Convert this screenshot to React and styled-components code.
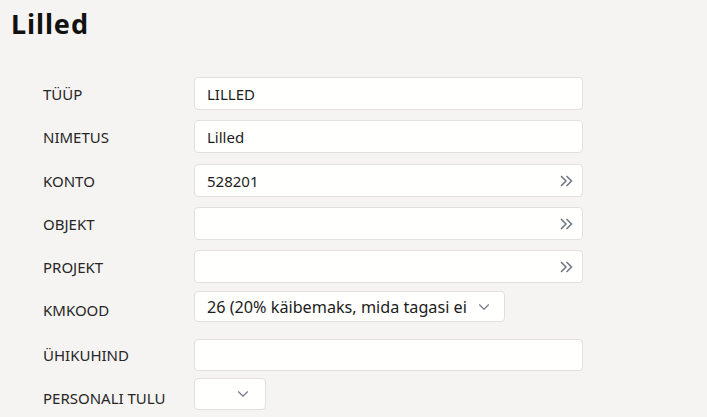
import React from "react";
import styled, { createGlobalStyle } from "styled-components";
import { ChevronDown } from "lucide-react";

const GlobalStyle = createGlobalStyle`
	html, body {
		margin: 0;
		background: #f5f4f3;
		font-family: "Noto Sans", "Open Sans", sans-serif;
		color: #222;
	}
`;

const Page = styled.div`
	width: 707px;
	height: 417px;
	overflow: hidden;
	background: #f5f4f3;
`;

const Title = styled.h1`
	margin: 0;
	padding: 5px 0 0 11px;
	height: 77px;
	box-sizing: border-box;
	font-size: 27px;
	font-weight: 700;
	color: #111;
	letter-spacing: 0.9px;
`;

const Form = styled.div`
	display: flex;
	flex-direction: column;
	padding-left: 43px;
`;

const Row = styled.div`
	display: flex;
	align-items: center;
	height: ${ props => props.h }px;
	margin-top: ${ props => props.mt }px;
`;

const Label = styled.div`
	width: 151px;
	font-size: 15px;
	text-transform: uppercase;
	color: #262626;
	transform: translateY(${ props => props.shift || 0 }px);
`;

const Field = styled.div`
	display: flex;
	align-items: center;
	box-sizing: border-box;
	height: 100%;
	width: ${ props => props.w }px;
	padding: 0 8px 0 12px;
	background: #fffffe;
	border: 1px solid #e2e0de;
	border-radius: 4px;
	font-size: ${ props => props.fs || 15 }px;
	color: #1c1c1c;
`;

const Value = styled.div`
	flex: 1;
	white-space: nowrap;
	overflow: hidden;
`;

const Icon = styled.span`
	display: flex;
	align-items: center;
	color: #747a84;
	margin-right: ${ props => props.mr || 0 }px;
`;

const DoubleArrow = () => (
	<svg width = "13" height = "12" viewBox = "0 0 13 12" fill = "none" stroke = "currentColor" strokeWidth = "1.7" strokeLinecap = "round" strokeLinejoin = "round">
		<path d = "M1.5 1.5 L6 6 L1.5 10.5" />
		<path d = "M7 1.5 L11.5 6 L7 10.5" />
	</svg>
);

const rows = [
	{ label: "Tüüp", value: "LILLED", mt: 0 },
	{ label: "Nimetus", value: "Lilled", mt: 10 },
	{ label: "Konto", value: "528201", mt: 11, link: true },
	{ label: "Objekt", value: "", mt: 10, link: true },
	{ label: "Projekt", value: "", mt: 10, link: true },
];

const App = () => (
	<Page>
		<GlobalStyle />
		<Title>Lilled</Title>
		<Form>
			{ rows.map( row => (
				<Row key = { row.label } h = { 33 } mt = { row.mt }>
					<Label>{ row.label }</Label>
					<Field w = { 389 }>
						<Value>{ row.value }</Value>
						{ row.link && <Icon mr = { 1 }><DoubleArrow /></Icon> }
					</Field>
				</Row>
			)) }
			<Row h = { 31 } mt = { 8 }>
				<Label shift = { 3 }>KMkood</Label>
				<Field w = { 311 } fs = { 16.2 }>
					<Value>26 (20% käibemaks, mida tagasi ei</Value>
					<Icon mr = { 3 }><ChevronDown size = { 18 } strokeWidth = { 1.5 } /></Icon>
				</Field>
			</Row>
			<Row h = { 32 } mt = { 17 }>
				<Label>Ühikuhind</Label>
				<Field w = { 389 } />
			</Row>
			<Row h = { 32 } mt = { 7 }>
				<Label shift = { 4 }>Personali tulu</Label>
				<Field w = { 72 }>
					<Value />
					<Icon mr = { 5 }><ChevronDown size = { 18 } strokeWidth = { 1.5 } /></Icon>
				</Field>
			</Row>
		</Form>
	</Page>
);

export default App;
